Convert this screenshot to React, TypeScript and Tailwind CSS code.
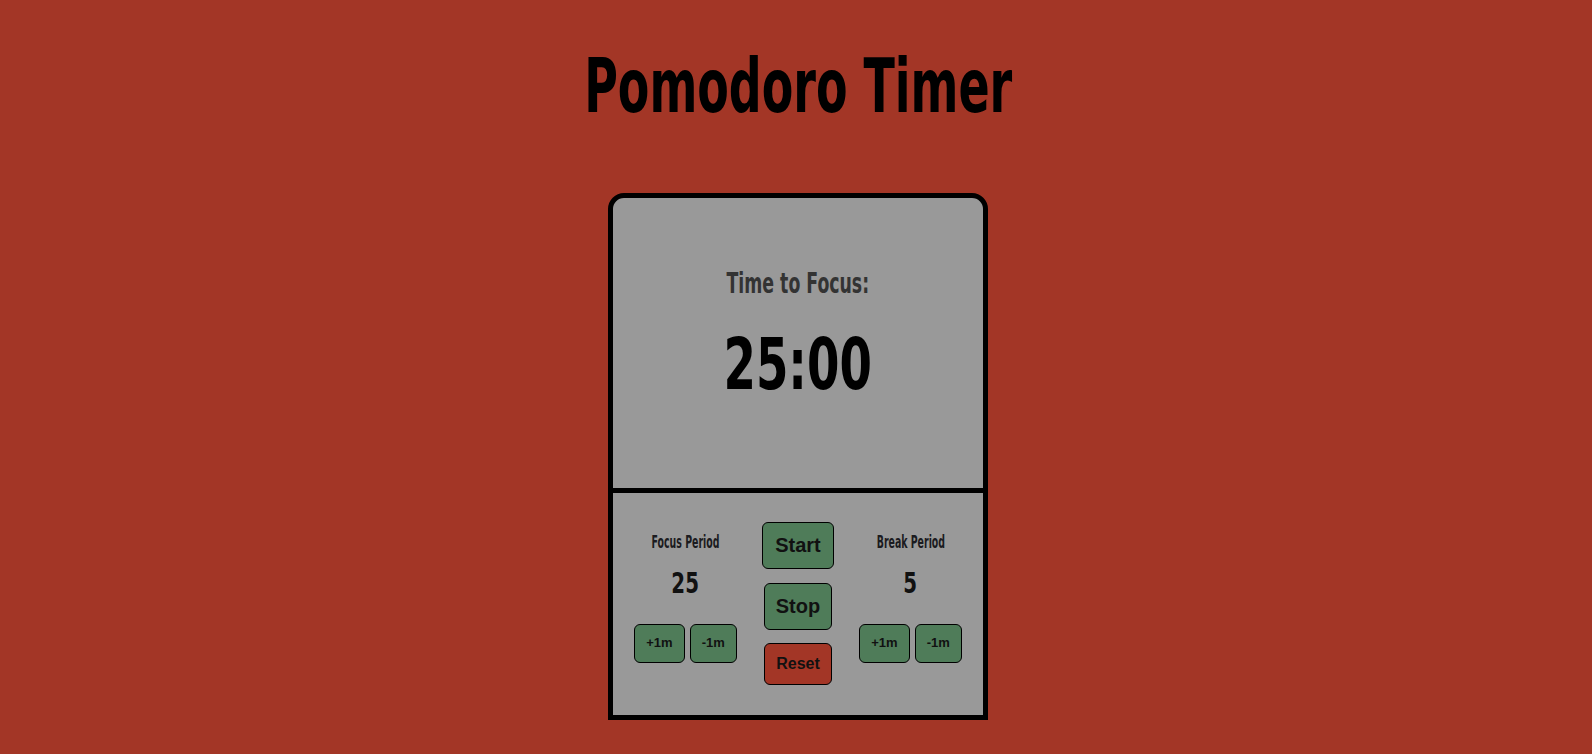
import { useState } from 'react';

// Oswald is not available: a condensed DejaVu, narrowed further, stands in for it
const cond = "font-['DejaVu_Sans',sans-serif] font-stretch-condensed font-bold whitespace-nowrap";
const btn = "font-['Liberation_Sans','Arial',sans-serif] font-bold text-[#111] border border-black rounded-[6px] p-[11px] leading-[1.15]";

function Period({ label, value, onInc, onDec }: { label: string; value: number; onInc: () => void; onDec: () => void }) {
  return (
    <div className="w-[103px] mt-[39px] flex flex-col items-center">
      <h3 className={`${cond} text-[18px] leading-[20px] text-[#1b1b20] scale-x-[0.58]`}>{label}</h3>
      <div className={`${cond} text-[29px] leading-[32px] mt-[15px] text-[#111] scale-x-[0.76]`}>{value}</div>
      <div className="flex gap-[5px] mt-[25px]">
        <button onClick={onInc} className={`${btn} text-[13px] bg-[#4f7c59]`}>+1m</button>
        <button onClick={onDec} className={`${btn} text-[13px] bg-[#4f7c59]`}>-1m</button>
      </div>
    </div>
  );
}

export default function App() {
  const [focus, setFocus] = useState(25);
  const [brk, setBrk] = useState(5);

  return (
    <div className="min-h-screen bg-[#a33626] flex flex-col items-center pl-[4px]">
      <h1 className={`${cond} text-[74px] leading-[80px] mt-[46px] text-black scale-x-[0.69]`}>Pomodoro Timer</h1>

      <div className="w-[380px] mt-[67px]">
        <div className="h-[300px] border-[5px] border-black rounded-t-[16px] bg-[#999999] flex flex-col items-center pt-[69px]">
          <h2 className={`${cond} text-[27.5px] leading-[32px] text-[#333] scale-x-[0.70]`}>Time to Focus:</h2>
          <div className={`${cond} text-[71px] leading-[80px] mt-[26px] text-black scale-x-[0.73]`}>
            {String(focus).padStart(2, '0')}:00
          </div>
        </div>
        <div className="h-[227px] border-[5px] border-t-0 border-black bg-[#999999] flex items-start justify-between px-[21px]">
          <Period label="Focus Period" value={focus} onInc={() => setFocus(focus + 1)} onDec={() => setFocus(Math.max(1, focus - 1))} />
          <div className="w-[72px] mt-[29px] flex flex-col items-center">
            <button className={`${btn} text-[20px] px-[12px] bg-[#4f7c59]`}>Start</button>
            <button className={`${btn} text-[20px] mt-[14px] bg-[#4f7c59]`}>Stop</button>
            <button className={`${btn} text-[16px] mt-[13px] bg-[#a33626]`}>Reset</button>
          </div>
          <Period label="Break Period" value={brk} onInc={() => setBrk(brk + 1)} onDec={() => setBrk(Math.max(1, brk - 1))} />
        </div>
      </div>
    </div>
  );
}
